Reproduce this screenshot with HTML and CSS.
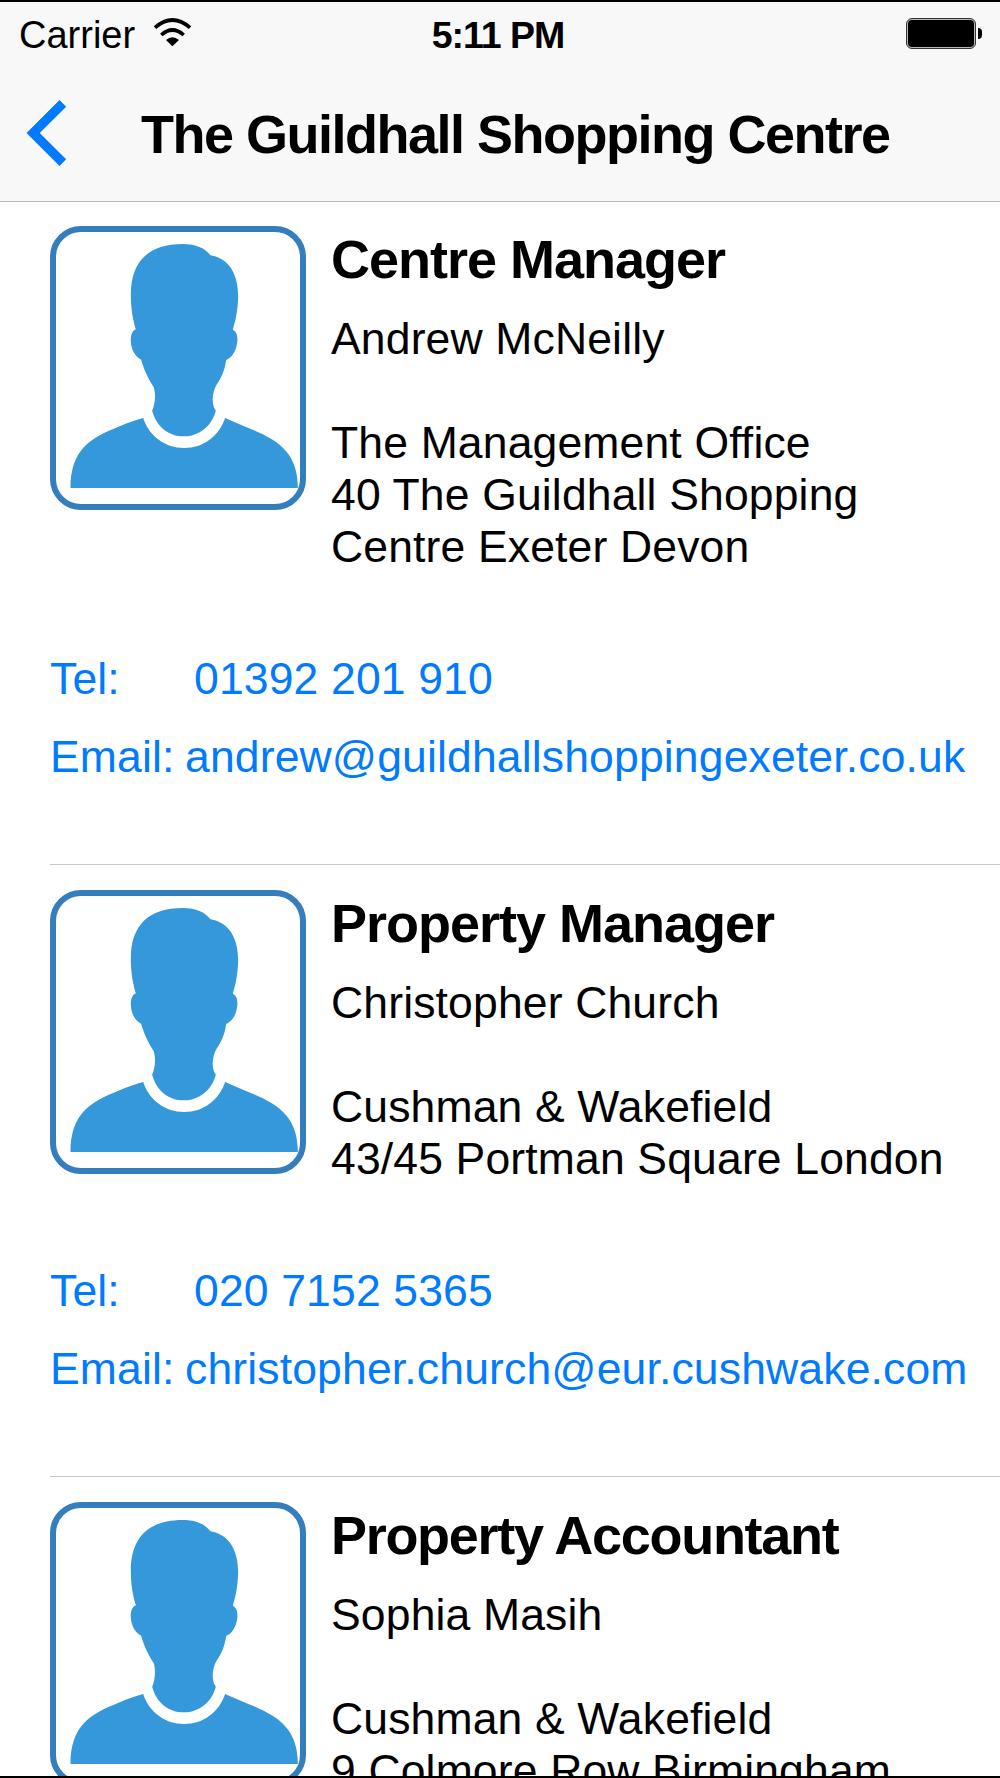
FILE: index.html
```html
<!DOCTYPE html>
<html lang="en">
  <head>
    <meta charset="UTF-8" />
    <meta name="viewport" content="width=device-width, initial-scale=1.0" />
    <title>The Guildhall Shopping Centre</title>
    <link rel="stylesheet" href="styles.css">
  </head>
  <body>
    <svg class="defs" width="0" height="0">
      <symbol id="person" viewBox="49 52 729 816">
        <path d="M272 240 C272 140 325 88 428 88 C468 88 494 100 511 122 C568 132 594 180 594 245 C593 285 587 315 578 345 C592 352 593 370 591 385 C587 410 576 428 558 436 C553 470 543 490 530 509 C518 530 514 555 521 578 L527 588 C515 635 475 665 431 665 C385 665 348 635 336 588 C345 570 347 540 341 518 C325 493 313 470 303 435 C284 426 273 404 272 380 C271 364 275 349 287 344 C278 315 272 280 272 240 Z" />
        <path d="M91 820 C91 705 150 670 235 636 C262 625 285 616 309 610 C327 665 375 700 432 700 C490 700 536 665 555 610 C580 622 605 631 632 643 C715 678 773 715 773 820 Z" />
      </symbol>
    </svg>

    <div class="screen">
      <header>
        <div class="status-bar">
          <div class="network">
            <span>Carrier</span>
            <svg class="wifi" viewBox="459 50 117 90">
              <path class="wave" d="M465 82 Q517 36 570 82" />
              <path class="wave" d="M484 104 Q517 74 551 104" />
              <path d="M498 119 Q517 103 537 119 L517 138 Z" />
            </svg>
          </div>
          <div class="time">5:11 PM</div>
          <div class="battery">
            <div class="battery-body"><div class="battery-level"></div></div>
            <div class="battery-cap"></div>
          </div>
        </div>
        <nav>
          <svg class="back" viewBox="78 301 122 198">
            <path d="M188 311 L99 400 L188 489" />
          </svg>
          <h1>The Guildhall Shopping Centre</h1>
        </nav>
      </header>

      <main>
        <section class="contact">
          <div class="details">
            <div class="avatar"><svg><use href="#person" /></svg></div>
            <div class="info">
              <h2>Centre Manager</h2>
              <p class="name">Andrew McNeilly</p>
              <p class="address">The Management Office<br />40 The Guildhall Shopping<br />Centre Exeter Devon</p>
            </div>
          </div>
          <a class="link tel"><span>Tel:</span>01392 201 910</a>
          <a class="link email"><span>Email:</span>andrew@guildhallshoppingexeter.co.uk</a>
        </section>

        <section class="contact">
          <div class="details">
            <div class="avatar"><svg><use href="#person" /></svg></div>
            <div class="info">
              <h2>Property Manager</h2>
              <p class="name">Christopher Church</p>
              <p class="address">Cushman &amp; Wakefield<br />43/45 Portman Square London</p>
            </div>
          </div>
          <a class="link tel"><span>Tel:</span>020 7152 5365</a>
          <a class="link email"><span>Email:</span>christopher.church@eur.cushwake.com</a>
        </section>

        <section class="contact">
          <div class="details">
            <div class="avatar"><svg><use href="#person" /></svg></div>
            <div class="info">
              <h2 class="long">Property Accountant</h2>
              <p class="name">Sophia Masih</p>
              <p class="address">Cushman &amp; Wakefield<br />9 Colmore Row Birmingham</p>
            </div>
          </div>
        </section>
      </main>
    </div>
  </body>
</html>
```
FILE: styles.css
```css
* {
  box-sizing: border-box;
}

body {
  margin: 0;
  background: #fff;
  font-family: 'Helvetica Neue', 'Liberation Sans', Arial, sans-serif;
  color: #000;
}

h1,
h2,
p {
  margin: 0;
}

.defs {
  display: block;
}

.screen {
  display: flex;
  flex-direction: column;
  height: 1778px;
  overflow: hidden;
  border-top: 2px solid #000;
  border-bottom: 2px solid #000;
}

/* header */
header {
  flex: none;
  height: 200px;
  background: #f8f8f8;
  border-bottom: 1px solid #b9b9b9;
}

.status-bar {
  display: grid;
  grid-template-columns: 1fr auto 1fr;
  align-items: center;
  height: 62px;
  padding: 0 17px 0 19px;
  font-size: 38px;
  line-height: 42px;
}

.network {
  display: flex;
  align-items: center;
  gap: 18px;
}

.network span {
  padding-top: 3px;
}

.wifi {
  width: 39px;
  height: 30px;
  margin-bottom: 2px;
}

.wave {
  fill: none;
  stroke: #000;
  stroke-width: 11;
}

.time {
  padding: 3px 6px 0 0;
  font-weight: bold;
  font-size: 37.5px;
  letter-spacing: -1px;
}

.battery {
  display: flex;
  align-items: center;
  justify-content: flex-end;
  gap: 2px;
}

.battery-body {
  width: 70px;
  height: 31px;
  padding: 1px;
  border: 1px solid #333;
  border-radius: 6px;
  background: #bbb;
}

.battery-level {
  height: 100%;
  border-radius: 4px;
  background: #000;
}

.battery-cap {
  width: 4px;
  height: 11px;
  margin-right: 1px;
  border-radius: 0 5px 5px 0;
  background: #000;
}

nav {
  display: flex;
  align-items: center;
  height: 137px;
  padding-left: 26px;
}

.back {
  width: 41px;
  height: 66px;
  margin-right: 74px;
}

.back path {
  fill: none;
  stroke: #007aff;
  stroke-width: 28;
}

h1,
h2 {
  font-size: 54px;
  line-height: 62px;
  letter-spacing: -1px;
  white-space: nowrap;
}

h1 {
  padding-top: 2px;
  letter-spacing: -1.5px;
}

h2.long {
  letter-spacing: -1.3px;
}

/* contact list */
main {
  flex: 1;
  min-height: 0;
  overflow: hidden;
  font-size: 44.5px;
  line-height: 52px;
  letter-spacing: 0.15px;
}

.contact {
  margin-left: 50px;
  padding: 25px 0 81px;
  border-bottom: 1px solid #c8c7cc;
}

.contact:first-child {
  padding-top: 24px;
}

.details {
  display: flex;
  align-items: flex-start;
}

.avatar {
  flex: none;
  width: 256px;
  height: 284px;
  margin-right: 25px;
  border: 6px solid #357ebd;
  border-radius: 31px;
}

.avatar svg {
  display: block;
  width: 100%;
  height: 100%;
  fill: #3498db;
}

.info {
  padding-top: 2px;
  white-space: nowrap;
}

.name {
  margin-top: 23px;
}

.address {
  margin-top: 52px;
}

.link {
  display: flex;
  color: #007aff;
  white-space: nowrap;
}

.tel {
  margin-top: 80px;
}

.tel span {
  width: 144px;
}

.email {
  margin-top: 26px;
}

.email span {
  width: 135px;
}
```
